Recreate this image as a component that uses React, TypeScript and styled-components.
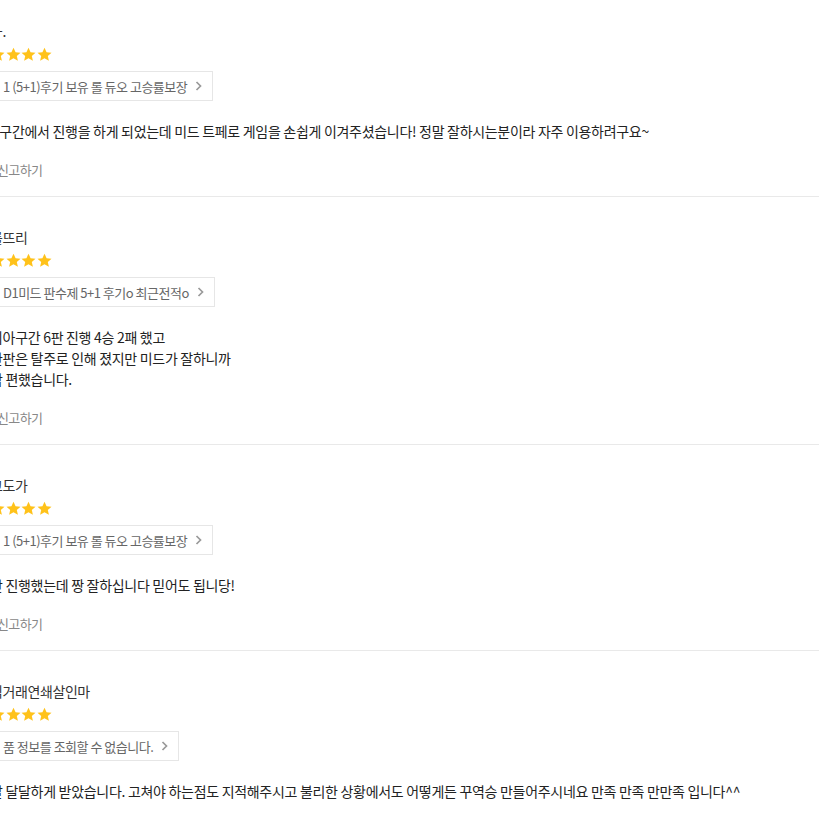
import React from "react";
import styled, { createGlobalStyle } from "styled-components";

const Global = createGlobalStyle`
  html, body {
    margin: 0;
    padding: 0;
    background: #fff;
    overflow: hidden;
  }
  body {
    font-family: "Noto Sans CJK KR", "Noto Sans", sans-serif;
    color: #222;
  }
`;

const List = styled.div`
  margin: -9px 0 0 -10px;
  display: flex;
  flex-direction: column;
`;

const Review = styled.article`
  display: flex;
  flex-direction: column;
  align-items: flex-start;
  padding: 30px 0 17px;
  border-bottom: 1px solid #e9e9e9;
`;

const Name = styled.div`
  font-size: 14px;
  line-height: 20px;
  letter-spacing: -0.4px;
  color: #333;
`;

const Stars = styled.div`
  display: flex;
  gap: 0.6px;
  margin-top: 5px;
  height: 16px;
  align-items: center;
`;

const Product = styled.a`
  display: flex;
  align-items: center;
  gap: 8px;
  margin-top: 9px;
  height: 30px;
  box-sizing: border-box;
  padding: 0 10px 0 12px;
  border: 1px solid #e6e6e6;
  font-size: 13px;
  letter-spacing: -0.5px;
  color: #666;
  text-decoration: none;
`;

const Body = styled.p`
  margin: 20px 0 0;
  font-size: 14px;
  line-height: 21px;
  letter-spacing: -0.3px;
  color: #222;
  white-space: pre-line;
`;

const Report = styled.button`
  margin-top: 19px;
  padding: 0 0 0 7px;
  border: 0;
  background: none;
  font-family: inherit;
  font-size: 13px;
  line-height: 18px;
  letter-spacing: -0.6px;
  color: #888;
`;

const Star = () => (
  <svg width="15" height="15" viewBox="0 0 24 24">
    <path
      d="M12 1l3.3 7.2 7.9.8-5.9 5.3 1.7 7.8L12 18.1l-7 4 1.7-7.8L.8 9l7.9-.8z"
      fill="#ffc21a"
    />
  </svg>
);

const Chevron = () => (
  <svg width="7" height="10" viewBox="0 0 7 10">
    <polyline points="1.5,1 5.5,5 1.5,9" fill="none" stroke="#999" strokeWidth="1.7" />
  </svg>
);

const reviews = [
  {
    name: "ㅡ.",
    product: "1 (5+1)후기 보유 롤 듀오 고승률보장",
    body: "D구간에서 진행을 하게 되었는데 미드 트페로 게임을 손쉽게 이겨주셨습니다! 정말 잘하시는분이라 자주 이용하려구요~",
  },
  {
    name: "롤뜨리",
    product: "D1미드 판수제 5+1 후기o 최근전적o",
    body: "이아구간 6판 진행 4승 2패 했고\n한판은 탈주로 인해 졌지만 미드가 잘하니까\n맘 편했습니다.",
  },
  {
    name: "고도가",
    product: "1 (5+1)후기 보유 롤 듀오 고승률보장",
    body: "판 진행했는데 짱 잘하십니다 믿어도 됩니당!",
  },
  {
    name: "직거래연쇄살인마",
    product: "품 정보를 조회할 수 없습니다.",
    body: "잘 달달하게 받았습니다. 고쳐야 하는점도 지적해주시고 불리한 상황에서도 어떻게든 꾸역승 만들어주시네요 만족 만족 만만족 입니다^^",
  },
];

export default function App() {
  return (
    <>
      <Global />
      <List>
        {reviews.map((r, i) => (
          <Review key={i}>
            <Name>{r.name}</Name>
            <Stars>
              {[0, 1, 2, 3].map((s) => (
                <Star key={s} />
              ))}
            </Stars>
            <Product href="#">
              <span>{r.product}</span>
              <Chevron />
            </Product>
            <Body>{r.body}</Body>
            <Report type="button">신고하기</Report>
          </Review>
        ))}
      </List>
    </>
  );
}
